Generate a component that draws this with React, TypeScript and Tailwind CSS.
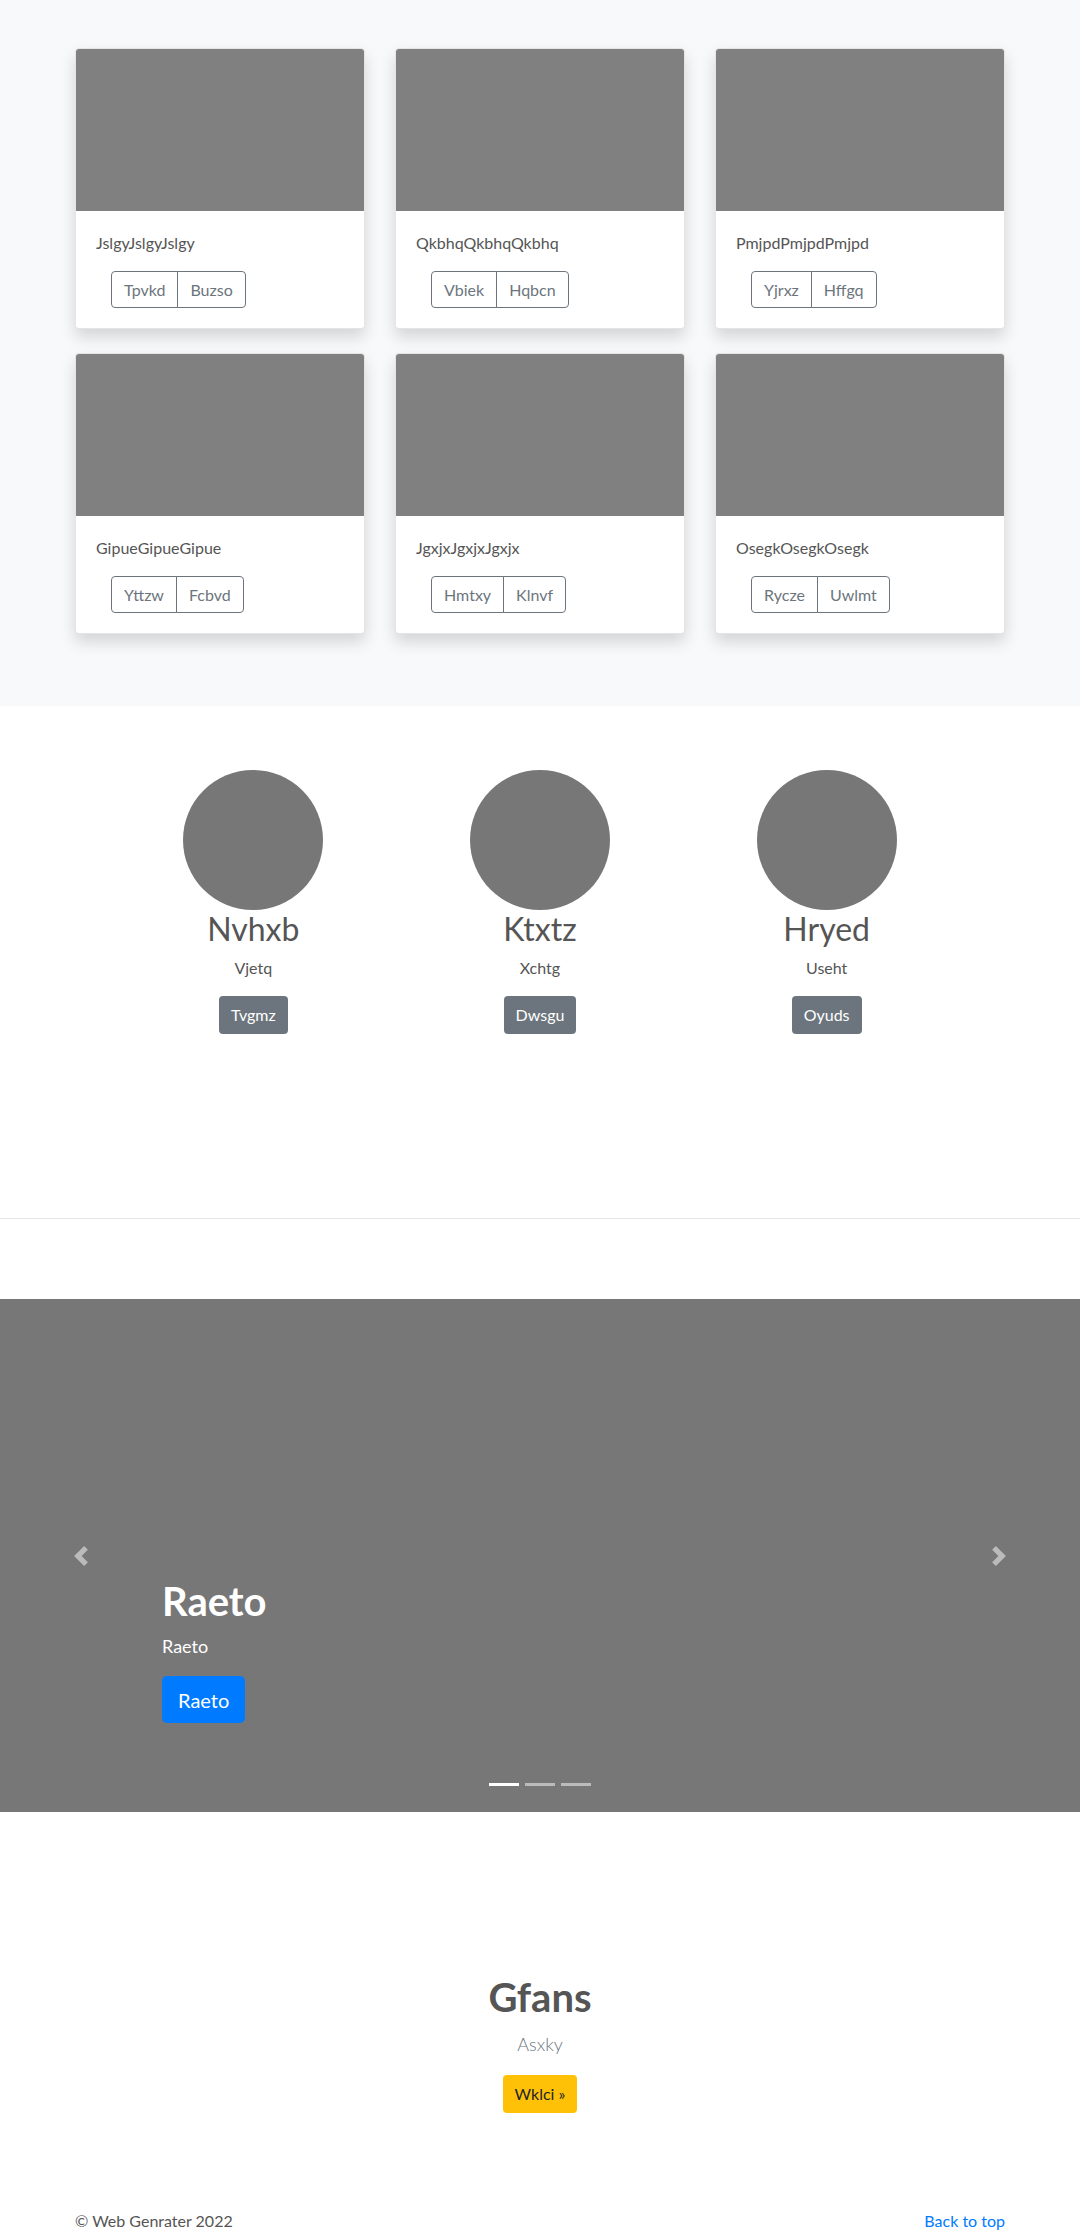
const cards = [
  { title: "JslgyJslgyJslgy", a: "Tpvkd", b: "Buzso" },
  { title: "QkbhqQkbhqQkbhq", a: "Vbiek", b: "Hqbcn" },
  { title: "PmjpdPmjpdPmjpd", a: "Yjrxz", b: "Hffgq" },
  { title: "GipueGipueGipue", a: "Yttzw", b: "Fcbvd" },
  { title: "JgxjxJgxjxJgxjx", a: "Hmtxy", b: "Klnvf" },
  { title: "OsegkOsegkOsegk", a: "Rycze", b: "Uwlmt" },
];

const team = [
  { name: "Nvhxb", role: "Vjetq", action: "Tvgmz" },
  { name: "Ktxtz", role: "Xchtg", action: "Dwsgu" },
  { name: "Hryed", role: "Useht", action: "Oyuds" },
];

function Card({ title, a, b }: { title: string; a: string; b: string }) {
  return (
    <div className="overflow-hidden rounded border border-black/10 bg-white shadow-[0_8px_16px_rgba(0,0,0,0.15)]">
      <div className="h-[162px] bg-[#808080]" />
      <div className="p-5">
        <p className="mb-4 text-base leading-6 text-[#555]">{title}</p>
        <div className="ml-[15px] inline-flex">
          <button className="h-[37px] rounded-l border border-[#6c757d] px-3 text-base text-[#6c757d]">
            {a}
          </button>
          <button className="-ml-px h-[37px] rounded-r border border-[#6c757d] px-3 text-base text-[#6c757d]">
            {b}
          </button>
        </div>
      </div>
    </div>
  );
}

export default function App() {
  return (
    <div className="bg-white font-['Lato','Liberation_Sans',sans-serif] text-[#555]">
      <section className="bg-[#f8f9fa] pb-[72px] pt-12">
        <div className="mx-auto grid w-[930px] grid-cols-3 gap-x-[30px] gap-y-6">
          {cards.map((c) => (
            <Card key={c.title} {...c} />
          ))}
        </div>
      </section>

      <section className="pt-16">
        <div className="mx-auto grid w-[860px] grid-cols-3">
          {team.map((t) => (
            <div key={t.name} className="flex flex-col items-center text-center">
              <div className="h-[140px] w-[140px] rounded-full bg-[#777]" />
              <h2 className="mb-2 text-[32px] font-normal leading-[38px] text-[#555]">{t.name}</h2>
              <p className="mb-4 text-base leading-6 text-[#555]">{t.role}</p>
              <button className="h-[38px] rounded bg-[#6c757d] px-3 text-base text-white">
                {t.action}
              </button>
            </div>
          ))}
        </div>
        <hr className="mt-[184px] border-t border-[#e5e5e5]" />
      </section>

      <section className="relative mt-20 h-[513px] bg-[#777]">
        <button className="absolute left-0 top-0 flex h-full w-[15%] items-center justify-center opacity-50">
          <svg width="20" height="20" viewBox="0 0 8 8" fill="#fff">
            <path d="M5.25 0l-4 4 4 4 1.5-1.5L4.25 4l2.5-2.5L5.25 0z" />
          </svg>
        </button>
        <button className="absolute right-0 top-0 flex h-full w-[15%] items-center justify-center opacity-50">
          <svg width="20" height="20" viewBox="0 0 8 8" fill="#fff">
            <path d="M2.75 0l-1.5 1.5L3.75 4l-2.5 2.5L2.75 8l4-4-4-4z" />
          </svg>
        </button>
        <div className="absolute bottom-[89px] left-[15%] text-left text-white">
          <h1 className="mb-2 text-[40px] font-bold leading-[48px]">Raeto</h1>
          <p className="mb-4 text-lg leading-[27px]">Raeto</p>
          <button className="h-[47px] rounded-[5px] bg-[#007bff] px-4 text-xl text-white">
            Raeto
          </button>
        </div>
        <div className="absolute bottom-[26px] left-0 right-0 flex justify-center gap-1.5">
          <span className="h-[3px] w-[30px] bg-white" />
          <span className="h-[3px] w-[30px] bg-white/50" />
          <span className="h-[3px] w-[30px] bg-white/50" />
        </div>
      </section>

      <section className="pt-[161px] text-center">
        <h1 className="mb-2 text-[40px] font-bold leading-[48px] text-[#555]">Gfans</h1>
        <p className="mb-4 text-lg font-light leading-[30px] text-[#6c757d]">Asxky</p>
        <button className="h-[38px] rounded bg-[#ffc107] px-3 text-base text-[#212529]">
          Wklci »
        </button>
      </section>

      <footer className="mx-auto flex w-[930px] items-center justify-between pt-[96px]">
        <p className="text-base leading-6 text-[#555]">© Web Genrater 2022</p>
        <a className="text-base leading-6 text-[#007bff]" href="#">
          Back to top
        </a>
      </footer>
    </div>
  );
}
